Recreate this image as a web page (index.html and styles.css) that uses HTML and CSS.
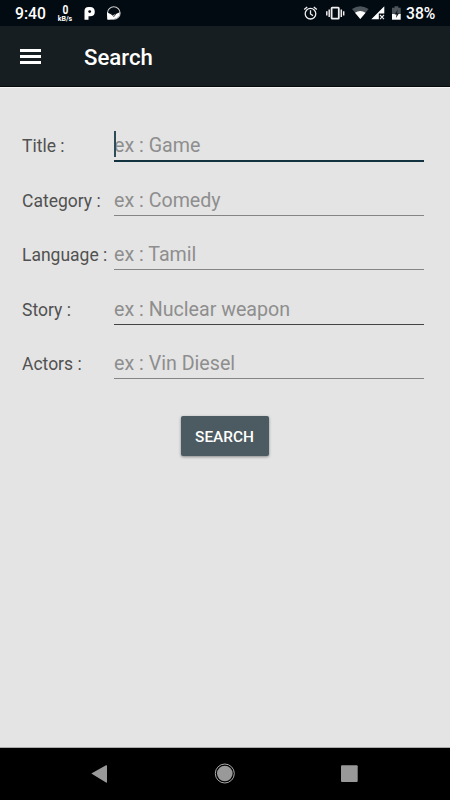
FILE: index.html
```html
<!DOCTYPE html>
<html lang="en">
<head>
<meta charset="utf-8">
<title>Search</title>
<link rel="stylesheet" href="styles.css">
</head>
<body>
<div class="screen">
  <div class="status">
    <span class="clock">9:40</span>
    <span class="speed"><span class="speed-num">0</span><span class="speed-unit">kB/s</span></span>
    <svg class="left-icons" width="40" height="26" viewBox="83 0 40 26">
      <path d="M84.5 19.7V10.8Q84.5 7 88.5 7H90Q94.8 7 94.8 11.7Q94.8 16.3 90 16.3H88.5V19.7Z" fill="#fff"/>
      <circle cx="89.7" cy="11.6" r="1.4" fill="#020a12"/>
      <circle cx="113.8" cy="13" r="6.3" fill="none" stroke="#ccc" stroke-width="1.1"/>
      <path d="M107 12.2L112.8 15.2L119.9 12.2Q119.5 16.5 116.3 18.3Q112 20.3 107.2 19.6Z" fill="#fff"/>
      <path d="M110.5 12.8L113.8 16.6L116.8 12.8" fill="none" stroke="#222c33" stroke-width=".8"/>
    </svg>
    <svg class="right-icons" width="102" height="26" viewBox="302 0 102 26">
      <g fill="none" stroke="#eee" stroke-width="1.3">
        <circle cx="310.5" cy="13.7" r="5.3"/>
        <path d="M310.5 10.3V14l2.5 1.6M304.2 9.6l3-2.7M316.8 9.6l-3-2.7"/>
        <rect x="331.6" y="7.7" width="7.2" height="11" rx=".6" stroke-width="1.8"/>
        <path d="M329.2 9.5v7.6M341.3 9.5v7.6M326.8 11.2v4.2M343.7 11.2v4.2" stroke-width="1.5"/>
      </g>
      <path d="M352 9Q360 3.4 368.6 9L360.3 19Z" fill="#4d555b"/>
      <path d="M355 12.8Q360.2 9.3 365.6 12.8L360.3 19Z" fill="#fff"/>
      <path d="M371.3 19.2L384.3 6.3V13.5H378.8V19.2Z" fill="#fff"/>
      <path d="M380 15l4 4.2M384 15l-4 4.2" stroke="#eee" stroke-width="1.1"/>
      <path d="M392 7.8h2.5V6.3h3.8v1.5h2.4V15H392Z" fill="#4d555b"/>
      <path d="M392 14h8.7v5.7H392Z" fill="#fff"/>
      <path d="M397.8 9.5l-3.3 5h2l-.5 3.5 3-4.8h-2Z" fill="#101820"/>
    </svg>
    <span class="battery">38%</span>
  </div>
  <header class="appbar">
    <div class="menu"><i></i><i></i><i></i></div>
    <h1>Search</h1>
  </header>
  <main>
    <div class="row"><label>Title :</label><div class="field focused">ex : Game</div></div>
    <div class="row"><label>Category :</label><div class="field">ex : Comedy</div></div>
    <div class="row"><label>Language :</label><div class="field">ex : Tamil</div></div>
    <div class="row"><label>Story :</label><div class="field dark">ex : Nuclear weapon</div></div>
    <div class="row"><label>Actors :</label><div class="field">ex : Vin Diesel</div></div>
    <button class="search">SEARCH</button>
  </main>
  <nav class="navbar">
    <svg width="450" height="52" viewBox="0 748 450 52">
      <path d="M91.3 773.5L106 765.3Q107 764.8 107 766V782Q107 783 106 782.5Z" fill="#999"/>
      <circle cx="224.8" cy="773.5" r="7.8" fill="#999"/>
      <circle cx="224.8" cy="773.5" r="9.5" fill="none" stroke="#aaa" stroke-width="1"/>
      <rect x="341" y="765.3" width="16.7" height="16.7" rx="1" fill="#999"/>
    </svg>
  </nav>
</div>
</body>
</html>
```
FILE: styles.css
```css
* { box-sizing: border-box; }
body { margin: 0; font-family: Roboto, "Liberation Sans", sans-serif; }
.screen { width: 450px; height: 800px; display: flex; flex-direction: column; background: #e4e4e4; overflow: hidden; }
.status { height: 26px; flex: none; background: #020a12; color: #fff; display: flex; align-items: center; padding: 2px 15px 0; font-weight: 500; font-size: 15.7px; line-height: 24px; }
.status svg { flex: none; margin-top: -2px; }
.clock { width: 42px; }
.speed { display: flex; flex-direction: column; align-items: center; width: 16px; margin-top: -1px; }
.speed-num { font-size: 12px; line-height: 11px; font-weight: 700; transform: scaleX(.85); }
.speed-unit { font-size: 7px; line-height: 7px; font-weight: 700; }
.left-icons { margin-left: 10px; }
.right-icons { margin-left: auto; }
.battery { width: 29px; margin-left: 2px; white-space: nowrap; }
.appbar { height: 61px; flex: none; background: #171e21; border-bottom: 1px solid #07090a; display: flex; align-items: center; padding-left: 20px; }
.menu { width: 21px; display: grid; gap: 3.4px; margin-top: 1px; }
.menu i { height: 2.6px; background: #fff; }
h1 { margin: 2px 0 0 43px; font-size: 22.2px; line-height: 28px; font-weight: 500; color: #fff; }
main { flex: 1; padding: 31px 26px 0 22px; border-top: 1px solid #f4f4f4; border-bottom: 1px solid #aaa; display: flex; flex-direction: column; }
.row { height: 54.5px; flex: none; display: flex; }
label { width: 92px; padding-top: 16px; font-size: 17.5px; line-height: 22px; color: #515151; white-space: nowrap; }
.field { position: relative; flex: 1; height: 42px; padding-top: 14px; font-size: 19.65px; line-height: 26px; color: #8e8e8e; border-bottom: 1px solid #858585; margin-right: .5px; }
.field.dark { border-color: #444; }
.field.focused { height: 43px; border-bottom: 2px solid #12323f; }
.field.focused::before { content: ""; position: absolute; left: 0; top: 12px; width: 2px; height: 26px; background: #2c4c58; }
.search { align-self: center; margin: 24px 0 0 3px; width: 88px; height: 40px; padding: 0; border: 0; border-radius: 2px; background: #4c5a61; color: #fff; font: 500 15.4px/42px Roboto, "Liberation Sans", sans-serif; box-shadow: 0 1px 3px rgba(0,0,0,.4); }
.navbar { height: 52px; flex: none; background: #000; }
.navbar svg { display: block; }
```
